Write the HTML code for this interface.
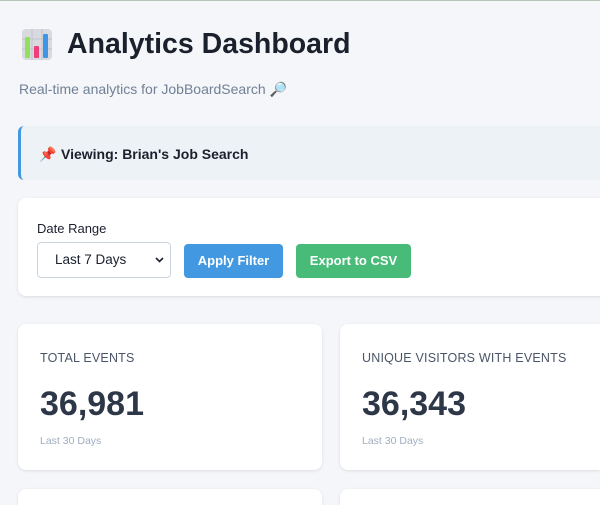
<!DOCTYPE html>
<html><head><style>
*{box-sizing:border-box;margin:0;padding:0}
html,body{width:600px;height:505px;overflow:hidden}
body{background:#f4f6f9;font-family:"Liberation Sans",sans-serif;color:#1a202c;position:relative}
.a{position:absolute}
h1{position:absolute;left:67px;top:28px;font-size:28.5px;font-weight:bold;color:#1a202c;white-space:nowrap}
.sub{left:19px;top:81px;font-size:14px;color:#718096}
.banner{left:18px;top:126px;width:582px;height:54px;background:#edf2f7;border-left:3px solid #4299e1;border-radius:6px 0 0 6px}
.banner span{position:absolute;left:40px;top:20px;font-weight:bold;font-size:14px;color:#1a202c}
.card{background:#fff;border-radius:8px;box-shadow:0 1px 3px rgba(0,0,0,.1)}
.btn{position:absolute;top:244px;height:34px;border-radius:4px;color:#fff;font-weight:bold;font-size:13px;text-align:center;line-height:34px}
.lbl{position:absolute;left:22px;top:27px;font-size:12.5px;color:#4a5568;letter-spacing:.2px}
.val{position:absolute;left:22px;top:61px;font-size:34px;font-weight:bold;color:#2d3748}
.sm{position:absolute;left:22px;top:111px;font-size:10.5px;color:#a0aec0}
</style></head><body>
<div class="a" style="left:0;top:0;width:600px;height:1px;background:#b5c7b5"></div>
<svg class="a" style="left:22px;top:29px" width="30" height="31" viewBox="0 0 30 31">
<rect x="0" y="0" width="30" height="31" rx="4" fill="#d9d9e0"/>
<path d="M0 10H30M0 20H30M10 0V31M20 0V31" stroke="#c4c4cc" stroke-width="1"/>
<rect x="3" y="8" width="5" height="21" rx="1" fill="#8fe05a"/>
<rect x="12" y="17" width="5" height="12" rx="1" fill="#ef3f7a"/>
<rect x="21" y="5" width="5" height="24" rx="1" fill="#3f95e6"/>
</svg>
<h1>Analytics Dashboard</h1>
<div class="a sub">Real-time analytics for JobBoardSearch 🔎</div>
<div class="a banner"><span style="left:18px">📌</span><span>Viewing: Brian's Job Search</span></div>
<div class="a card" style="left:18px;top:198px;width:620px;height:98px"></div>
<div class="a" style="left:37px;top:221px;font-size:13px;color:#1a202c">Date Range</div>
<div class="a" style="left:37px;top:242px;width:134px;height:36px;border:1px solid #cbd5e0;border-radius:4px;background:#fff;font-size:13.5px;line-height:34px;padding-left:17px">Last 7 Days<svg style="position:absolute;right:6px;top:14px" width="9" height="6" viewBox="0 0 9 6"><path d="M1 1L4.5 4.5L8 1" stroke="#1a202c" stroke-width="1.6" fill="none"/></svg></div>
<div class="btn" style="left:184px;width:99px;background:#4299e1">Apply Filter</div>
<div class="btn" style="left:296px;width:115px;background:#48bb78">Export to CSV</div>
<div class="a card" style="left:18px;top:324px;width:304px;height:146px"><div class="lbl">TOTAL EVENTS</div><div class="val">36,981</div><div class="sm">Last 30 Days</div></div>
<div class="a card" style="left:340px;top:324px;width:260px;height:146px;border-radius:8px 0 0 8px"><div class="lbl">UNIQUE VISITORS WITH EVENTS</div><div class="val">36,343</div><div class="sm">Last 30 Days</div></div>
<div class="a card" style="left:18px;top:489px;width:304px;height:16px;border-radius:8px 8px 0 0"></div>
<div class="a card" style="left:340px;top:489px;width:260px;height:16px;border-radius:8px 0 0 0"></div>
</body></html>
